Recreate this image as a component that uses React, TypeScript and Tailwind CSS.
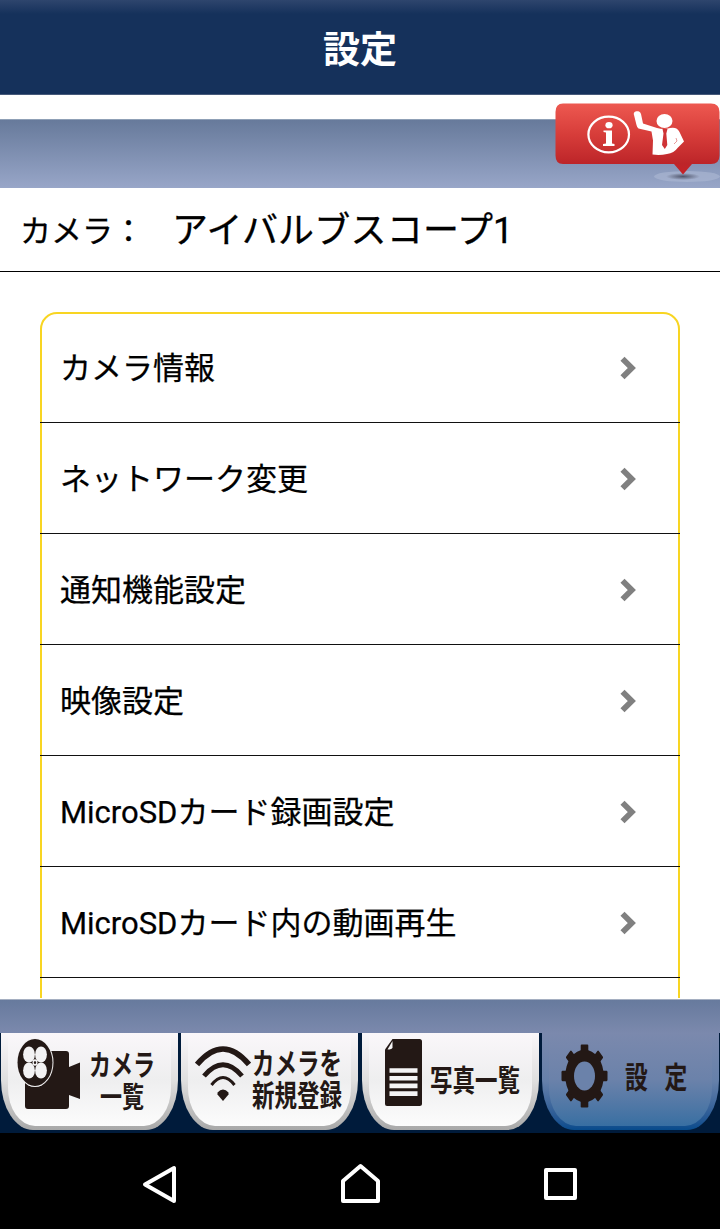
import type { ReactNode } from 'react';

const menuItems = [
  'カメラ情報',
  'ネットワーク変更',
  '通知機能設定',
  '映像設定',
  'MicroSDカード録画設定',
  'MicroSDカード内の動画再生',
];

function Chevron() {
  return (
    <svg className="mr-[43px] h-6 w-[17px]" viewBox="0 0 17 24" fill="none" stroke="#808080" strokeWidth="5.800">
      <path d="M2.500 2.800 11.800 12 2.500 21.200" />
    </svg>
  );
}

function InfoBubble() {
  return (
    <svg className="absolute right-0 -top-[18px] h-[82px] w-[168px]" viewBox="552 102 168 82">
      <defs>
        <linearGradient id="bubble" gradientUnits="userSpaceOnUse" x1="0" y1="104" x2="0" y2="174">
          <stop offset="0" stopColor="#ed5850" />
          <stop offset="0.45" stopColor="#d63c39" />
          <stop offset="0.85" stopColor="#bd2529" />
          <stop offset="1" stopColor="#c52127" />
        </linearGradient>
        <radialGradient id="shade">
          <stop offset="0" stopColor="#51566c" />
          <stop offset="1" stopColor="#51566c" stopOpacity="0" />
        </radialGradient>
      </defs>
      <ellipse cx="687" cy="176.500" rx="33" ry="5.5" fill="#aeb9d4" opacity="0.6" />
      <ellipse cx="683" cy="176.500" rx="17" ry="3.5" fill="url(#shade)" />
      <path
        d="M563 103.500H711Q719.500 103.500 719.500 112V155.500Q719.500 164 711 164H692L683 174.500 674 164H563Q555.500 164 555.500 155.500V112Q555.500 103.500 563 103.500Z"
        fill="url(#bubble)"
      />
      <ellipse cx="608.700" cy="134.500" rx="20.300" ry="17.800" fill="none" stroke="#fff" strokeWidth="2.200" />
      <ellipse cx="609" cy="125.200" rx="3.600" ry="3.100" fill="#fff" />
      <path d="M603.500 130.500H612V143.500L614.500 144V146H603V144L606 143.500V132.500L603.500 132Z" fill="#fff" />
      <ellipse cx="664.500" cy="121" rx="8" ry="7" fill="#fff" />
      <path
        d="M634 115C633 112 636 110.500 639 111.500Q640.500 112 641 114L643 123.500 657 128Q664 130 670 128 677 126.500 679.500 132L684 141.500 678 147.500Q674 153 667 154 660 155.500 652.500 154.500L653 140.500 651.500 131.500 638.500 128.500Q637 127.500 636.500 125Z"
        fill="#fff"
      />
      <path d="M662.500 129H667.500L666.300 133.500 667.300 145 664.800 149 662 145 663.500 133.500Z" fill="#cf3436" />
      <path d="M676 138 677 141 674 144" stroke="#cf3436" strokeWidth="0.500" fill="none" />
    </svg>
  );
}

function MovieCameraIcon() {
  return (
    <svg className="h-[72px] w-[64px] shrink-0" viewBox="0 0 64 72">
      <path d="M11 13H49Q52 13 52 16V29L63 24.500V61L52 57V68Q52 71 49 71H11Q8 71 8 68V16Q8 13 11 13Z" fill="#231815" />
      <ellipse cx="18" cy="24.500" rx="18.500" ry="24.500" fill="#f3f2f3" />
      <ellipse cx="18" cy="24.500" rx="17.500" ry="23.500" fill="#231815" />
      <g fill="#f3f2f3">
        <ellipse cx="12" cy="16.500" rx="5.900" ry="8" />
        <ellipse cx="24" cy="16.500" rx="5.900" ry="8" />
        <ellipse cx="12" cy="32.500" rx="5.900" ry="8" />
        <ellipse cx="24" cy="32.500" rx="5.900" ry="8" />
        <ellipse cx="18" cy="24.500" rx="2.500" ry="3.300" />
      </g>
      <ellipse cx="18" cy="24.500" rx="1.100" ry="1.500" fill="#231815" />
    </svg>
  );
}

function WifiIcon() {
  return (
    <svg className="h-[56px] w-[56px] shrink-0" viewBox="0 0 56 56" fill="none" stroke="#231815">
      <path d="M2 18.500Q28-12.500 54 18.500" strokeWidth="5.600" />
      <path d="M9 30Q28 7.500 47 30" strokeWidth="4.800" />
      <path d="M16.500 39Q28 24 39.500 39" strokeWidth="3" />
      <path d="M22.500 46.500Q28 40.500 33.500 46.500V48.500L28 55 22.500 48.500Z" fill="#231815" stroke="none" />
    </svg>
  );
}

function DocumentIcon() {
  return (
    <svg className="h-[67px] w-[37px] shrink-0" viewBox="0 0 37 67">
      <path d="M7.500 0H34.500Q37 0 37 2.500V64.500Q37 67 34.500 67H2Q0 67 0 65V10.500Z" fill="#231815" />
      <path d="M7.500 2V8.500Q7 10.500 2.500 10.500Z" fill="#f5f4f5" />
      <path d="M4.500 31.500H32.500M4.500 39.200H32.500M4.500 46.900H32.500M4.500 54.600H32.500" stroke="#f5f4f5" strokeWidth="4.600" />
    </svg>
  );
}

function GearIcon() {
  return (
    <svg className="h-[64px] w-[47px] shrink-0" viewBox="-23.500 -32 47 64">
      <g transform="scale(1 1.370)">
        {[0, 45, 90, 135].map((angle) => (
          <rect key={angle} x="-3.800" y="-23" width="7.600" height="46" rx="1" fill="#231815" transform={`rotate(${angle})`} />
        ))}
        <circle r="14.700" fill="none" stroke="#231815" strokeWidth="9" />
        <circle r="10.500" fill="#6b82aa" />
      </g>
    </svg>
  );
}

function Tab({ active, children }: { active?: boolean; children: ReactNode }) {
  return (
    <div
      className={`h-[97px] w-[177px] shrink-0 rounded-b-[32px_50px] px-[7px] pb-[4px] ${
        active
          ? 'bg-linear-to-b from-[#7b89ad] via-[#6580aa] to-[#064b8c]'
          : 'bg-linear-to-b from-[#faf7fa] via-[#dedede] to-[#a8a8a8]'
      }`}
    >
      <div
        className={`h-full rounded-b-[27px_38px] ${
          active
            ? 'bg-linear-to-b from-[#7b89ad] via-[#6b82aa] to-[#386fa2]'
            : 'bg-linear-to-b from-[#faf7fa] via-[#eeeeef] to-[#fcfcfc]'
        }`}
      >
        {children}
      </div>
    </div>
  );
}

function TabLabel({ className, children }: { className: string; children: ReactNode }) {
  return (
    <span className={`block origin-top-left font-bold whitespace-nowrap text-[#231815] ${className}`}>{children}</span>
  );
}

function TabBar() {
  return (
    <nav className="flex h-[100px] gap-[3.300px] overflow-hidden bg-[#001b3b] pl-px">
      <Tab>
        <div className="flex pt-[5px] pl-[9px]">
          <MovieCameraIcon />
          <div className="ml-[8px] w-[70px] pt-[12px]">
            <TabLabel className="text-[29px] leading-[32px] scale-x-[.76]">カメラ</TabLabel>
            <TabLabel className="ml-[11px] text-[29px] leading-[32px] scale-x-[.76]">一覧</TabLabel>
          </div>
        </div>
      </Tab>
      <Tab>
        <div className="flex pt-[13px] pl-[7px]">
          <WifiIcon />
          <div className="w-[92px] pt-[2px] pl-px">
            <TabLabel className="text-[30px] leading-[32px] scale-x-[.75]">カメラを</TabLabel>
            <TabLabel className="text-[30px] leading-[32px] scale-x-[.75]">新規登録</TabLabel>
          </div>
        </div>
      </Tab>
      <Tab>
        <div className="flex pt-[6px] pl-[16px]">
          <DocumentIcon />
          <TabLabel className="ml-[8px] mt-[26px] w-[92px] text-[30px] leading-[32px] scale-x-[.75]">写真一覧</TabLabel>
        </div>
      </Tab>
      <Tab active>
        <div className="flex pt-[11px] pl-[12px]">
          <GearIcon />
          <TabLabel className="ml-[17px] mt-[18px] w-[90px] text-[30px] leading-[32px] tracking-[22px] scale-x-[.76]">
            設定
          </TabLabel>
        </div>
      </Tab>
    </nav>
  );
}

function SystemBar() {
  return (
    <div className="flex h-24 items-center justify-between bg-black px-[140px]">
      <svg className="h-[44px] w-[40px]" viewBox="0 -1 40 44" fill="none" stroke="#fff" strokeWidth="4" strokeLinejoin="round">
        <path d="M5 24.500 34 8V41Z" />
      </svg>
      <svg className="h-[44px] w-[40px]" viewBox="0 -1 40 44" fill="none" stroke="#fff" strokeWidth="4" strokeLinejoin="round">
        <path d="M3 21 20.500 6 38 21V41H3Z" />
      </svg>
      <svg className="h-[44px] w-[40px]" viewBox="0 -1 40 44" fill="none" stroke="#fff" strokeWidth="4" strokeLinejoin="round">
        <path d="M6 10H35V38H6Z" />
      </svg>
    </div>
  );
}

export default function App() {
  return (
    <div className="flex h-[1229px] w-[720px] flex-col overflow-hidden bg-white font-['Roboto','Noto_Sans_CJK_JP',sans-serif] text-black">
      <header className="flex h-[95px] shrink-0 items-center justify-center border-b border-[#46597a] bg-[#15315b] bg-[linear-gradient(#2e456d,#15315b_14px)]">
        <h1 className="pt-[7px] text-[37px] leading-[48px] font-bold text-white">設定</h1>
      </header>

      <div className="relative mt-6 h-[69px] shrink-0 border-t border-[#8fa0b6] bg-linear-to-b from-[#677a9b] to-[#98a6c8]">
        <InfoBubble />
      </div>

      <div className="flex h-[84px] shrink-0 items-center border-b border-black pl-[20px] [-webkit-text-stroke:0.3px_black]">
        <span className="w-[152px] pt-[6px] text-[31px]">カメラ：</span>
        <span className="pt-[3px] text-[36px] tracking-[0.2px]">アイバルブスコープ1</span>
      </div>

      <main className="min-h-0 flex-1 overflow-hidden border-b border-white px-10 pt-10">
        <ul className="h-[800px] rounded-t-[17px] border-2 border-[#f8d522]">
          {menuItems.map((item) => (
            <li
              key={item}
              className="-mx-0.5 flex h-[111px] items-center justify-between border-b border-[#111] pt-px pl-[20px] text-[31px] first:h-[109px] first:pt-0"
            >
              <span className="pt-[3px] [-webkit-text-stroke:0.25px_black]">{item}</span>
              <Chevron />
            </li>
          ))}
        </ul>
      </main>

      <footer className="shrink-0">
        <div className="h-[34px] border-t border-[#a5afc1] bg-linear-to-b from-[#677a9d] to-[#7b89ad]" />
        <TabBar />
        <SystemBar />
      </footer>
    </div>
  );
}
